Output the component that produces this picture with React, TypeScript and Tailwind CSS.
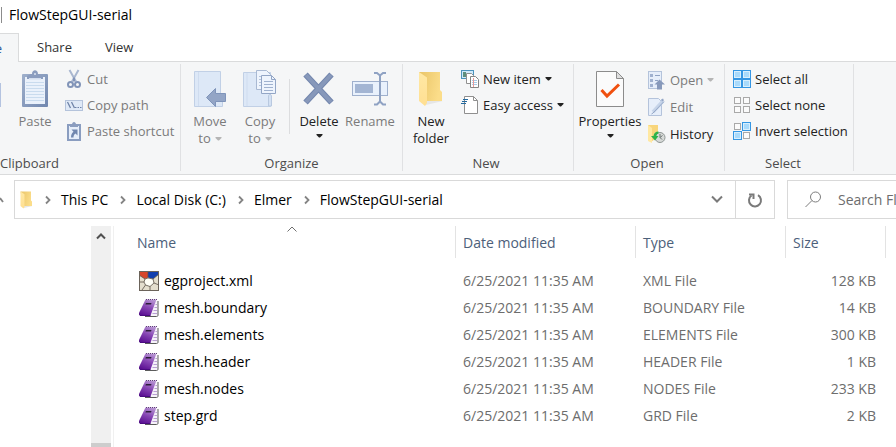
import type { ReactNode } from "react";

/* ---------- icons ---------- */

function Caret({ className = "" }: { className?: string }) {
  return (
    <svg width="7" height="4" viewBox="0 0 7 4" className={`shrink-0 ${className}`} aria-hidden="true">
      <path d="M0.500 0h6v1L4 3.500H3L0.500 1z" fill="currentColor" />
    </svg>
  );
}

function PasteIcon() {
  return (
    <svg width="28" height="38" viewBox="0 0 28 38" aria-hidden="true">
      <defs>
        <linearGradient id="board" x1="0" y1="0" x2="1" y2="1">
          <stop offset="0" stopColor="#9fb0cc" />
          <stop offset="1" stopColor="#7187af" />
        </linearGradient>
      </defs>
      <rect x="1" y="4" width="26" height="33" rx="1" fill="url(#board)" />
      <rect x="4" y="7" width="20" height="27" fill="#eaf1fb" />
      <path d="M5 12.500h18M5 15.500h18M5 18.500h18M5 21.500h18M5 24.500h18M5 27.500h18M5 30.500h18" stroke="#c9dbee" />
      <path d="M6 9V6l4-2h1c0-5 6-5 6 0h1l4 2v3z" fill="#8b9dbf" />
      <path d="M8 8h12v1.500H8z" fill="#d4deee" />
      <circle cx="14" cy="4" r="1" fill="#dbe4f1" />
    </svg>
  );
}

function CutIcon() {
  return (
    <svg width="18" height="20" viewBox="0 0 18 20" fill="none" aria-hidden="true">
      <path d="M4.500 1L11 12.500M13.500 1L7 12.500" stroke="#a9b7d0" strokeWidth="2" />
      <path d="M9 8.500v4" stroke="#8194b8" strokeWidth="2" />
      <circle cx="5.500" cy="15.500" r="2.500" stroke="#8194b8" strokeWidth="2" />
      <circle cx="12.500" cy="15.500" r="2.500" stroke="#8194b8" strokeWidth="2" />
    </svg>
  );
}

function CopyPathIcon() {
  return (
    <svg width="18" height="18" viewBox="0 0 18 18" fill="none" aria-hidden="true">
      <rect x="0.500" y="4.500" width="17" height="10" fill="#dfe9f7" stroke="#b4c3db" />
      <path d="M2.500 6l3 6M6.500 6l3 6" stroke="#6f83a8" strokeWidth="1.300" />
      <path d="M10 11.500h1.500M12.500 11.500H14M15 11.500h1.500" stroke="#6f83a8" />
    </svg>
  );
}

function PasteShortcutIcon() {
  return (
    <svg width="18" height="20" viewBox="0 0 18 20" fill="none" aria-hidden="true">
      <rect x="3" y="4" width="12" height="15" fill="#e6eefa" stroke="#8a9dc0" strokeWidth="2" />
      <path d="M5 6V3.500h2C7 0 11 0 11 3.500h2V6z" fill="#8b9dbf" />
      <path d="M6.500 8.500h6v6l-2-2c-1.500 1-2 2-2 4H6c0-3 1-4.500 2.500-5.700z" fill="#7187af" />
    </svg>
  );
}

function MoveIcon() {
  return (
    <svg width="34" height="38" viewBox="0 0 34 38" aria-hidden="true">
      <path d="M1.500 1.500h26v30h2v5h-28z" fill="#dde8f7" stroke="#c1d0e6" />
      <path d="M5.500 2v34" stroke="#cfdcef" />
      <path d="M13.500 27.500L22.500 18.500v5h10v8h-10v5z" fill="#93a5c6" stroke="#7f94ba" />
    </svg>
  );
}

function CopyIcon() {
  return (
    <svg width="34" height="38" viewBox="0 0 34 38" fill="none" aria-hidden="true">
      <path d="M0.500 2.500h27v34h-27z" fill="#dde8f7" stroke="#c1d0e6" />
      <path d="M4 3v33" stroke="#cfdcef" />
      <path d="M25.500 36V26c0-2 3-2 3 0v10z" fill="#d4e1f3" stroke="#b9c9e0" />
      <path d="M13.500 0.500h10l4 4v15h-14z" fill="#eef4fd" stroke="#a9b9d3" />
      <path d="M16 6.500h6M16 9.500h6M16 12.500h6M16 15.500h6" stroke="#b4c4dc" />
      <path d="M18.500 5.500h10l4 4v14h-14z" fill="#eef4fd" stroke="#93a6c6" />
      <path d="M28.500 5.500v4h4" stroke="#93a6c6" />
      <path d="M21 11.500h9M21 14.500h9M21 17.500h9M21 20.500h9" stroke="#a0b2cf" />
    </svg>
  );
}

function DeleteIcon() {
  return (
    <svg width="34" height="38" viewBox="0 0 34 38" aria-hidden="true">
      <path d="M3.500 4.500L29.500 32.500M29.500 4.500L3.500 32.500" stroke="#7487ae" strokeWidth="6" />
      <path d="M4 5L29 32M29 5L4 32" stroke="#8798ba" strokeWidth="4" />
    </svg>
  );
}

function RenameIcon() {
  return (
    <svg width="36" height="38" viewBox="0 0 36 38" fill="none" aria-hidden="true">
      <rect x="0.500" y="11.500" width="35" height="14" fill="#e9f1fc" stroke="#9fb0cd" />
      <rect x="3" y="14" width="18" height="9" fill="#a3b5d3" />
      <path
        d="M22 3h3l3 2.500L31 3h3M28 5v27M22 34.500h3l3-3 3 3h3"
        stroke="#8fa2c3"
        strokeWidth="2"
      />
    </svg>
  );
}

function FolderIcon({ width, height }: { width: number; height: number }) {
  return (
    <svg width={width} height={height} viewBox="0 0 26 36" aria-hidden="true">
      <defs>
        <linearGradient id="folder-back" x1="0" y1="0" x2="1" y2="0.300">
          <stop offset="0" stopColor="#e9c467" />
          <stop offset="1" stopColor="#fbdd8a" />
        </linearGradient>
        <linearGradient id="folder-front" x1="0" y1="0" x2="0" y2="1">
          <stop offset="0" stopColor="#ffe8a4" />
          <stop offset="1" stopColor="#ffdf92" />
        </linearGradient>
      </defs>
      <path d="M8 30h17l-17 4z" fill="#e6e6e6" />
      <path d="M1 1h21v18l2 2v9H6z" fill="url(#folder-back)" />
      <path d="M1 1l8 5.500V32l-2 3-6-5z" fill="url(#folder-front)" />
    </svg>
  );
}

function NewItemIcon() {
  return (
    <svg width="18" height="18" viewBox="0 0 18 18" fill="none" aria-hidden="true">
      <rect x="0.500" y="0.500" width="12" height="8" fill="#cfe9fb" stroke="#4d93bd" />
      <path d="M2 2h3v5H2z" fill="#5d8f7d" />
      <path d="M5.500 3.500h5l2 2v8h-7z" fill="#fff" stroke="#909090" />
      <path d="M9.500 6.500h5l3 3v8h-8z" fill="#fff" stroke="#858585" />
      <path d="M11 10.500h5M11 12.500h5M11 14.500h5" stroke="#a5cbe8" />
      <path d="M12.500 8v9" stroke="#e99a9a" />
    </svg>
  );
}

function EasyAccessIcon() {
  return (
    <svg width="18" height="18" viewBox="0 0 18 18" fill="none" aria-hidden="true">
      <path d="M3.500 0.500h9l4 4v13h-13z" fill="#fff" stroke="#8f8f8f" />
      <path d="M12.500 0.500v4h4" stroke="#8f8f8f" />
      <path d="M2 3.500h5M1 5.500h5M0 7.500h5" stroke="#246a9f" />
    </svg>
  );
}

function PropertiesIcon() {
  return (
    <svg width="28" height="38" viewBox="0 0 28 38" fill="none" aria-hidden="true">
      <path d="M0.500 1.500h20l7 7v28h-27z" fill="#fbfbfb" stroke="#8c8c8c" />
      <path d="M20.500 1.500v7h7z" fill="#dedede" stroke="#8c8c8c" />
      <path d="M5.500 20l5.500 6L23 14.500" stroke="#f0500f" strokeWidth="3" />
    </svg>
  );
}

function OpenIcon() {
  return (
    <svg width="18" height="20" viewBox="0 0 18 20" fill="none" aria-hidden="true">
      <rect x="0.500" y="1.500" width="13" height="17" fill="#e6eefa" stroke="#b4c3db" />
      <path d="M2 4h3v3H2zM2 9h3v3H2zM2 14h3v3H2z" fill="#a0b1cf" />
      <path d="M7 5.500h5M7 10.500h3" stroke="#8fa2c3" />
      <path d="M11.500 9.500l5.500 5h-3v5H9v-5H6.500z" fill="#8799bb" />
    </svg>
  );
}

function EditIcon() {
  return (
    <svg width="18" height="18" viewBox="0 0 18 18" fill="none" aria-hidden="true">
      <path d="M0.500 0.500h10l3 3v14h-13z" fill="#e6eefa" stroke="#b4c3db" />
      <path d="M15 3L5 14" stroke="#c6d4e9" strokeWidth="3.500" />
      <path d="M16 3.500L5 15l-1.500 1" stroke="#93a6c6" />
      <path d="M13.500 2.500l2-1" stroke="#93a6c6" strokeWidth="2" />
    </svg>
  );
}

function HistoryIcon() {
  return (
    <svg width="18" height="18" viewBox="0 0 18 18" fill="none" aria-hidden="true">
      <path d="M0 0h10v12L3 17 0 15z" fill="#f8d57b" />
      <path d="M0 0l4 3v15l-4-2z" fill="#ffe8a2" />
      <circle cx="12" cy="12.500" r="5" fill="#d7dad8" stroke="#8f9694" />
      <path d="M12 9v3.500l2.500-2M12 12.500l2 2" stroke="#6d7573" />
      <path d="M10.500 6.500c-3 0-4.500 1.500-5 4.500H3l4 4.500 3.500-4.500H8.500c0-1.500.5-2 2-2.500z" fill="#2db34a" />
    </svg>
  );
}

function SelectIcon({ filled }: { filled: number[] }) {
  return (
    <svg width="18" height="18" viewBox="0 0 18 18" aria-hidden="true">
      {[0, 1, 2, 3].map((i) =>
        filled.includes(i) ? (
          <g key={i}>
            <rect
              x={i % 2 ? 9.5 : 0.5}
              y={i > 1 ? 9.5 : 0.5}
              width="8"
              height="8"
              fill="#d9effd"
              stroke="#3596e3"
            />
            <rect x={i % 2 ? 11 : 2} y={i > 1 ? 11 : 2} width="5" height="5" fill="#a9dafb" />
          </g>
        ) : (
          <rect
            key={i}
            x={i % 2 ? 10.5 : 1.5}
            y={i > 1 ? 10.5 : 1.5}
            width="6"
            height="6"
            fill="#fbfbfb"
            stroke="#a9a9a9"
          />
        ),
      )}
    </svg>
  );
}

function ProjectFileIcon() {
  return (
    <svg width="20" height="20" viewBox="0 0 20 20" aria-hidden="true">
      <rect width="20" height="20" fill="#e4decd" />
      <path d="M0 0h9v7L6 8 0 4z" fill="#d6452a" />
      <path d="M9 0h11v3l-6 5-5-1z" fill="#123fae" />
      <path d="M6 8l3-1.500L14 8l1 4-4 3.500-4.500-1.500L5 11z" fill="#fffef6" />
      <path
        d="M9 0v7M0 4l6 4M14 8l6-5M6 8l3-1 5 1 1 4-4 3.500L6.500 14 5 11zM5 11H0M6.500 14L3 19M11 15.500V20M15 12l5 2"
        fill="none"
        stroke="#5a5248"
        strokeWidth="0.800"
      />
      <rect x="0.500" y="0.500" width="19" height="19" fill="none" stroke="#6b635a" />
    </svg>
  );
}

function NotebookIcon() {
  return (
    <svg width="20" height="20" viewBox="0 0 20 20" aria-hidden="true">
      <defs>
        <linearGradient id="cover" x1="0.700" y1="0" x2="0.300" y2="1">
          <stop offset="0" stopColor="#b794d3" />
          <stop offset="0.500" stopColor="#8746b4" />
          <stop offset="1" stopColor="#5c1193" />
        </linearGradient>
      </defs>
      <path d="M5 17.500L16 3h3v13.500c0 1-.5 1.500-1.500 1.500z" fill="#f6f2fa" />
      <path d="M6 18.500h11.500c1 0 1.500-.5 1.500-1.500V3" fill="none" stroke="#5b5b5b" />
      <path d="M16.500 6.500H18M15.500 9.500H18M14.500 12.500H18M13.500 15.500H18" stroke="#b99fd3" />
      <path d="M6.500 1.500h11L11.500 17.500H1L0 15z" fill="url(#cover)" />
      <path d="M0 15l1 2.500h10.500" fill="none" stroke="#4a0b80" />
      <path d="M7 1.500h11" stroke="#5f4078" strokeDasharray="1 1" />
      <path d="M6.500 6l.5-1h5.500l-.5 1.500h-5.500z" fill="#2c1c3a" />
    </svg>
  );
}

function Chevron() {
  return (
    <svg width="6" height="10" viewBox="0 0 6 10" fill="none" className="shrink-0" aria-hidden="true">
      <path d="M1 1.500L4.500 5 1 8.500" stroke="#848484" strokeWidth="1.800" />
    </svg>
  );
}

/* ---------- ribbon parts ---------- */

function Group({ label, className, children }: { label: string; className: string; children: ReactNode }) {
  return (
    <section
      aria-label={label}
      className={`flex shrink-0 flex-col border-r border-[#e0e1e3] text-[13px] text-[#222] ${className}`}
    >
      <div className="flex h-[92px] items-start">{children}</div>
      <h2 className="text-center leading-4 text-[#4c4c4c]">{label}</h2>
    </section>
  );
}

function LargeButton({
  icon,
  className,
  disabled,
  children,
}: {
  icon: ReactNode;
  className: string;
  disabled?: boolean;
  children: ReactNode;
}) {
  return (
    <button
      type="button"
      disabled={disabled}
      className={`flex shrink-0 flex-col items-center pt-1.5 leading-[17px] disabled:text-[#7b7b7b] ${className}`}
    >
      <span className="mb-[5px] flex h-[38px] items-center">{icon}</span>
      {children}
    </button>
  );
}

function SmallButton({
  icon,
  disabled,
  caret,
  children,
}: {
  icon: ReactNode;
  disabled?: boolean;
  caret?: boolean;
  children: ReactNode;
}) {
  return (
    <button
      type="button"
      disabled={disabled}
      className="flex h-[26px] items-center gap-1 whitespace-nowrap disabled:text-[#7b7b7b]"
    >
      <span className="flex w-[18px] shrink-0 justify-center">{icon}</span>
      {children}
      {caret && <Caret className={disabled ? "text-[#b5b5b5]" : ""} />}
    </button>
  );
}

function Ribbon() {
  return (
    <div className="flex h-[113px] overflow-hidden border-b border-[#dadbdc] bg-[#f5f6f7] pt-0.5 pb-[3px]">
      <Group label="Clipboard" className="-ml-[121px] w-[302px]">
        <div className="flex w-full justify-end pr-2.5">
          <button type="button" disabled aria-label="Copy" className="mt-[19px] mr-2 h-6 w-6 bg-[#b4c3e0]" />
          <LargeButton icon={<PasteIcon />} className="mr-1 w-[52px]" disabled>
            Paste
          </LargeButton>
          <div className="w-[105px] pt-0.5">
            <SmallButton icon={<CutIcon />} disabled>
              Cut
            </SmallButton>
            <SmallButton icon={<CopyPathIcon />} disabled>
              Copy path
            </SmallButton>
            <SmallButton icon={<PasteShortcutIcon />} disabled>
              Paste shortcut
            </SmallButton>
          </div>
        </div>
      </Group>

      <Group label="Organize" className="w-[222px] pr-1 pl-1">
        <LargeButton icon={<MoveIcon />} className="w-[50px]" disabled>
          <span>Move</span>
          <span className="flex items-center gap-1">
            to <Caret className="text-[#b5b5b5]" />
          </span>
        </LargeButton>
        <LargeButton icon={<CopyIcon />} className="w-[50px]" disabled>
          <span>Copy</span>
          <span className="flex items-center gap-1">
            to <Caret className="text-[#b5b5b5]" />
          </span>
        </LargeButton>
        <div className="mx-1 mt-[15px] h-[55px] w-px bg-[#dcdddf]" />
        <LargeButton icon={<DeleteIcon />} className="w-[50px]">
          <span>Delete</span>
          <Caret className="mt-1" />
        </LargeButton>
        <LargeButton icon={<RenameIcon />} className="w-[52px]" disabled>
          Rename
        </LargeButton>
      </Group>

      <Group label="New" className="w-[171px] pr-2 pl-1">
        <LargeButton icon={<FolderIcon width={26} height={36} />} className="w-[48px]">
          <span>New</span>
          <span>folder</span>
        </LargeButton>
        <div className="ml-1.5 pt-0.5">
          <SmallButton icon={<NewItemIcon />} caret>
            New item
          </SmallButton>
          <SmallButton icon={<EasyAccessIcon />} caret>
            Easy access
          </SmallButton>
        </div>
      </Group>

      <Group label="Open" className="w-[151px] pr-2 pl-1">
        <LargeButton icon={<PropertiesIcon />} className="w-[64px]">
          <span>Properties</span>
          <Caret className="mt-1" />
        </LargeButton>
        <div className="ml-1.5 flex flex-col gap-px pt-[3px]">
          <SmallButton icon={<OpenIcon />} disabled caret>
            Open
          </SmallButton>
          <SmallButton icon={<EditIcon />} disabled>
            Edit
          </SmallButton>
          <SmallButton icon={<HistoryIcon />}>History</SmallButton>
        </div>
      </Group>

      <Group label="Select" className="w-[129px] pr-5 pl-2">
        <div className="pt-0.5">
          <SmallButton icon={<SelectIcon filled={[0, 1, 2, 3]} />}>Select all</SmallButton>
          <SmallButton icon={<SelectIcon filled={[]} />}>Select none</SmallButton>
          <SmallButton icon={<SelectIcon filled={[1, 2]} />}>Invert selection</SmallButton>
        </div>
      </Group>
    </div>
  );
}

/* ---------- address bar ---------- */

const crumbs = ["This PC", "Local Disk (C:)", "Elmer", "FlowStepGUI-serial"];

function AddressBar() {
  return (
    <div className="flex h-[39px] gap-3">
      <div className="flex min-w-0 flex-1">
        <button type="button" aria-label="Up" className="flex w-3.5 shrink-0 items-center">
          <svg width="5" height="8" viewBox="0 0 5 8" fill="none" aria-hidden="true">
            <path d="M0 2l3 4" stroke="#848484" strokeWidth="1.800" />
          </svg>
        </button>
        <nav
          aria-label="Path"
          className="flex min-w-0 flex-1 items-center border border-[#d9d9d9] pl-[5px] whitespace-nowrap"
        >
          <FolderIcon width={13} height={18} />
          <ol className="flex flex-1 items-center">
            {crumbs.map((crumb) => (
              <li key={crumb} className="flex items-center gap-2.5 pl-3">
                <Chevron />
                <a href="#path" className="text-black">
                  {crumb}
                </a>
              </li>
            ))}
          </ol>
          <button type="button" aria-label="Previous locations" className="flex h-full w-[37px] items-center justify-center">
            <svg width="12" height="9" viewBox="0 0 12 9" fill="none" aria-hidden="true">
              <path d="M1 1.500l5 5 5-5" stroke="#7a7a7a" strokeWidth="2" />
            </svg>
          </button>
          <button
            type="button"
            aria-label="Refresh"
            className="flex h-full w-[39px] items-center justify-center border-l border-[#d9d9d9]"
          >
            <svg width="16" height="16" viewBox="0 0 16 16" fill="none" aria-hidden="true">
              <path d="M11 3.200a6 6 0 1 1-6.500.3" stroke="#7a7a7a" strokeWidth="2" />
              <path d="M2 2.500h4.500v4.500" stroke="#7a7a7a" strokeWidth="2" />
            </svg>
          </button>
        </nav>
      </div>
      <label className="flex w-[109px] shrink-0 items-center border-y border-l border-[#d9d9d9] pl-[17px]">
        <svg width="17" height="17" viewBox="0 0 17 17" fill="none" className="shrink-0" aria-hidden="true">
          <circle cx="10.500" cy="6" r="5" stroke="#7d7d7d" />
          <path d="M7 9.500L0.500 16" stroke="#7d7d7d" />
        </svg>
        <input
          type="text"
          aria-label="Search"
          placeholder="Search FlowStepGUI-serial"
          className="ml-4 min-w-0 flex-1 bg-transparent outline-none placeholder:text-[#6d6d6d]"
        />
      </label>
    </div>
  );
}

/* ---------- file list ---------- */

const files = [
  { name: "egproject.xml", type: "XML File", size: "128 KB" },
  { name: "mesh.boundary", type: "BOUNDARY File", size: "14 KB" },
  { name: "mesh.elements", type: "ELEMENTS File", size: "300 KB" },
  { name: "mesh.header", type: "HEADER File", size: "1 KB" },
  { name: "mesh.nodes", type: "NODES File", size: "233 KB" },
  { name: "step.grd", type: "GRD File", size: "2 KB" },
];

function FileTable() {
  return (
    <table className="w-full table-fixed border-separate border-spacing-0 text-left whitespace-nowrap">
      <colgroup>
        <col className="w-[342px]" />
        <col className="w-[180px]" />
        <col className="w-[150px]" />
        <col className="w-[100px]" />
        <col />
      </colgroup>
      <thead className="text-[#4c607a]">
        <tr className="h-8">
          <th className="relative border-r border-[#e3e3e3] p-0 pt-0.5 pl-[23px] font-normal">
            Name
            <svg
              width="10"
              height="6"
              viewBox="0 0 10 6"
              fill="none"
              className="absolute top-0 left-[173px]"
              aria-hidden="true"
            >
              <path d="M0.500 5.500L5 1l4.500 4.500" stroke="#6f6f6f" />
            </svg>
          </th>
          <th className="border-r border-[#e3e3e3] p-0 pt-0.5 pl-[7px] font-normal">Date modified</th>
          <th className="border-r border-[#e3e3e3] p-0 pt-0.5 pl-[7px] font-normal">Type</th>
          <th className="border-r border-[#e3e3e3] p-0 pt-0.5 pl-[7px] font-normal">Size</th>
          <td />
        </tr>
      </thead>
      <tbody className="text-[#6d6d6d]">
        <tr className="h-[9px]" aria-hidden="true">
          <td colSpan={5} className="p-0" />
        </tr>
        {files.map((file, i) => (
          <tr key={file.name} className="h-[27px]">
            <td className="p-0 pl-[25px] text-black">
              <span className="flex items-center gap-[5px]">
                {i === 0 ? <ProjectFileIcon /> : <NotebookIcon />}
                {file.name}
              </span>
            </td>
            <td className="p-0 pl-[7px]">6/25/2021 11:35 AM</td>
            <td className="p-0 pl-[7px]">{file.type}</td>
            <td className="p-0 pr-2.5 text-right">{file.size}</td>
            <td />
          </tr>
        ))}
      </tbody>
    </table>
  );
}

export default function App() {
  return (
    <div className="flex min-h-screen flex-col overflow-hidden bg-white font-['Open_Sans','Noto_Sans',sans-serif] text-[14px] leading-5">
      <header className="flex h-[33px] items-center pb-[3px] text-black">
        <span className="ml-px h-4 w-px bg-[#8c8c8c]" />
        <h1 className="ml-[7px]">FlowStepGUI-serial</h1>
      </header>

      <div role="tablist" className="flex h-[29px] text-[13px] text-[#333]">
        <button
          role="tab"
          aria-selected="true"
          className="flex w-[19px] items-center justify-end overflow-hidden border-t border-r border-[#dadbdc] bg-[#f5f6f7] pr-4 text-[#2b579a]"
        >
          Home
        </button>
        <div className="flex flex-1 border-b border-[#dadbdc] pl-[18px]">
          <button role="tab" aria-selected="false" className="w-[68px] text-left">
            Share
          </button>
          <button role="tab" aria-selected="false">
            View
          </button>
        </div>
      </div>

      <Ribbon />

      <div className="pt-[5px]">
        <AddressBar />
      </div>

      <main className="flex flex-1 pt-[7px]">
        <div className="ml-[91px] flex w-5 shrink-0 flex-col items-center justify-between bg-[#f0f0f0] pt-1.5">
          <svg width="10" height="8" viewBox="0 0 10 8" fill="none" aria-hidden="true">
            <path d="M1 6.500l4-4 4 4" stroke="#505050" strokeWidth="2" />
          </svg>
          <div className="h-1 w-full bg-[#cdcdcd]" />
        </div>
        <div className="ml-0.5 min-w-0 flex-1 border-l border-[#f0f0f0]">
          <FileTable />
        </div>
      </main>
    </div>
  );
}
